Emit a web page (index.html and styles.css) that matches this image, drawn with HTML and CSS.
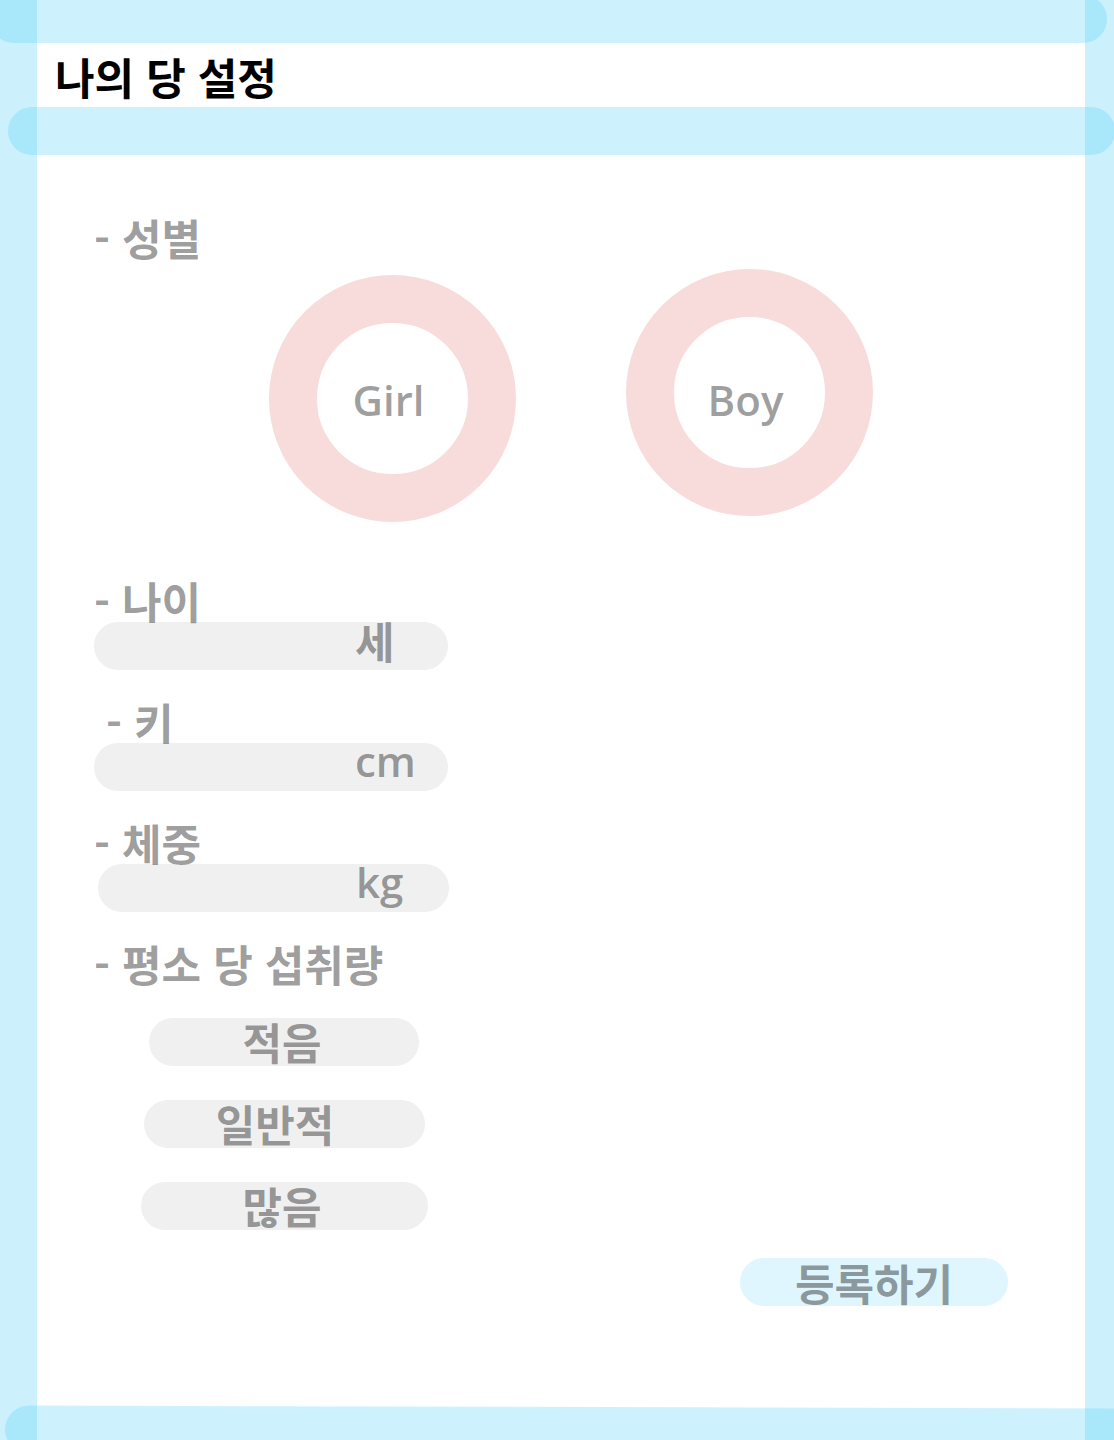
FILE: index.html
```html
<!DOCTYPE html>
<html lang="ko">
<head>
  <meta charset="utf-8">
  <meta name="viewport" content="width=device-width, initial-scale=1">
  <title>나의 당 설정</title>
  <link rel="stylesheet" href="styles.css">
</head>
<body>
  <div class="page">
    <div class="bar bar-top"></div>
    <header class="header">
      <h1 class="title">나의 당 설정</h1>
    </header>
    <div class="bar bar-middle"></div>

    <main class="main">
      <form class="form">
        <section class="gender" aria-labelledby="gender-label">
          <h2 class="label" id="gender-label">- 성별</h2>
          <div class="gender-options">
            <button class="ring" type="button">Girl</button>
            <button class="ring ring-raised" type="button">Boy</button>
          </div>
        </section>

        <div class="fields">
          <div class="field">
            <label class="label" for="age">- 나이</label>
            <div class="pill entry">
              <input class="entry-input" id="age" type="text" inputmode="numeric">
              <span class="unit">세</span>
            </div>
          </div>
          <div class="field">
            <label class="label label-indent" for="height">- 키</label>
            <div class="pill entry">
              <input class="entry-input" id="height" type="text" inputmode="numeric">
              <span class="unit unit-latin">cm</span>
            </div>
          </div>
          <div class="field">
            <label class="label" for="weight">- 체중</label>
            <div class="pill entry entry-short">
              <input class="entry-input" id="weight" type="text" inputmode="numeric">
              <span class="unit unit-latin">kg</span>
            </div>
          </div>
        </div>

        <section class="intake" aria-labelledby="intake-label">
          <h2 class="label" id="intake-label">- 평소 당 섭취량</h2>
          <div class="intake-options">
            <button class="pill choice choice-low" type="button">적음</button>
            <button class="pill choice choice-normal" type="button">일반적</button>
            <button class="pill choice choice-high" type="button">많음</button>
          </div>
        </section>

        <button class="pill submit" type="submit">등록하기</button>
      </form>
    </main>

    <div class="bar bar-bottom"></div>
  </div>
</body>
</html>
```
FILE: styles.css
```css
:root {
  --band: #ccf1fd;
  --bar: rgba(82, 207, 248, 0.29);
  --ring: #f8dcdc;
  --pill: #f0f0f0;
  --text: rgba(0, 0, 0, 0.4);
  --latin: "Open Sans", "Noto Sans CJK KR", sans-serif;
}

* {
  box-sizing: border-box;
}

body {
  margin: 0;
  background: #fff;
  color: var(--text);
  font-family: "Noto Sans CJK KR", sans-serif;
  font-size: 43px;
  font-weight: 700;
  line-height: 40px;
}

button,
input {
  border: 0;
  padding: 0;
  background: none;
  color: inherit;
  font: inherit;
}

button {
  cursor: pointer;
}

.page {
  display: flex;
  flex-direction: column;
  min-height: 100vh;
  overflow: hidden;
  padding: 0 29px 0 37px;
  background:
    linear-gradient(var(--band), var(--band)) left / 37px 100% no-repeat,
    linear-gradient(var(--band), var(--band)) right / 29px 100% no-repeat;
}

.bar {
  flex: none;
  height: 48px;
  border-radius: 24px;
  background: var(--bar);
}

.bar-top {
  margin: -5px -22px 0 -47px;
}

.bar-middle {
  margin: 0 -30px 0 -29px;
}

.bar-bottom {
  margin: auto -60px -15px -32px;
  transform: rotate(0.15deg);
}

.header {
  display: flex;
  align-items: center;
  height: 64px;
  padding: 2px 18px 0;
}

.title {
  margin: 0;
  color: #000;
  font-size: 43px;
  font-weight: 700;
  line-height: 48px;
}

.main {
  padding: 64px 77px 0 57px;
}

.form {
  display: flex;
  flex-direction: column;
}

.label {
  display: block;
  height: 40px;
  margin: 0;
  font-size: 43px;
  font-weight: 700;
  line-height: 36px;
}

.label-indent {
  padding-left: 12px;
}

.gender-options {
  display: flex;
  align-items: baseline;
  gap: 110px;
  margin: 10px 0 60px 175px;
}

.ring {
  width: 247px;
  height: 247px;
  border: 48px solid var(--ring);
  border-radius: 50%;
  padding: 2px 8px 0 0;
  font-family: var(--latin);
  font-size: 42px;
  font-weight: 600;
}

.ring-raised {
  padding-top: 14px;
}

.fields {
  display: flex;
  flex-direction: column;
  gap: 33px;
}

.pill {
  height: 48px;
  border-radius: 24px;
  background: var(--pill);
}

.entry {
  display: flex;
  width: 354px;
}

.entry-short {
  width: 351px;
  margin-left: 4px;
}

.entry-input {
  flex: 1;
  min-width: 0;
  padding-left: 24px;
}

.unit {
  width: 93px;
  line-height: 36px;
}

.unit-latin {
  font-family: var(--latin);
  font-size: 42px;
  font-weight: 600;
}

.intake {
  margin-top: 33px;
}

.intake-options {
  display: flex;
  flex-direction: column;
  align-items: center;
  gap: 34px;
  width: 380px;
  margin-top: 33px;
}

.choice {
  padding: 0 4px 2px 0;
}

.choice-low {
  width: 270px;
}

.choice-normal {
  width: 281px;
  padding-right: 18px;
}

.choice-high {
  width: 287px;
}

.submit {
  align-self: flex-end;
  width: 268px;
  margin-top: 28px;
  background: #dff6fe;
}
```
